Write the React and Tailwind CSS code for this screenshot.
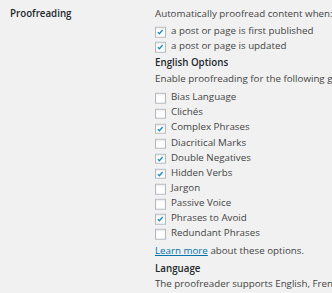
import React from 'react';

const Check = ({ checked }) => (
  <span className="relative inline-block w-[10.5px] h-[10.5px] mr-[5.5px] shrink-0 bg-white border border-[#b4b9be] shadow-[inset_0_1px_2px_rgba(0,0,0,0.1)] translate-y-[1.75px]">
    {checked && (
      <svg viewBox="0 0 10 10" className="absolute left-[0px] top-[0px] w-[8.5px] h-[8.5px]">
        <path d="M2.2 5.2 L4 7 L7.8 2.6" fill="none" stroke="#1e8cbe" strokeWidth="1.6" />
      </svg>
    )}
  </span>
);

const Row = ({ checked, children }) => (
  <div className="flex items-center h-[15.1px]">
    <Check checked={checked} />
    <span>{children}</span>
  </div>
);

export default function App() {
  const options = [
    ['Bias Language', false],
    ['Clichés', false],
    ['Complex Phrases', true],
    ['Diacritical Marks', false],
    ['Double Negatives', true],
    ['Hidden Verbs', true],
    ['Jargon', false],
    ['Passive Voice', false],
    ['Phrases to Avoid', true],
    ['Redundant Phrases', false],
  ];

  return (
    <div
      className="flex w-[332px] h-[293px] overflow-hidden bg-[#f1f1f1] text-[#444] text-[9.75px] leading-[15px] whitespace-nowrap"
      style={{ fontFamily: '"Open Sans", sans-serif' }}
    >
      <div className="w-[155px] shrink-0 pl-[10px] pt-[6px] font-semibold text-[#23282d]">Proofreading</div>

      <div className="pt-[6px]">
        <div>Automatically proofread content when:</div>
        <div className="mt-[2px]">
          <Row checked>a post or page is first published</Row>
          <Row checked>a post or page is updated</Row>
        </div>

        <div className="mt-[1.8px] font-semibold text-[#23282d]">English Options</div>
        <div className="mt-[1px]">Enable proofreading for the following grammar and style rules:</div>
        <div className="mt-[3.2px]">
          {options.map(([label, on]) => (
            <Row key={label} checked={on}>{label}</Row>
          ))}
        </div>

        <div className="mt-[2.8px]">
          <a href="#" className="text-[#0073aa] underline">Learn more</a> about these options.
        </div>
        <div className="mt-[3px] font-semibold text-[#23282d]">Language</div>
        <div className="mt-[0.5px]">The proofreader supports English, French, German, Portuguese and Spanish.</div>
      </div>
    </div>
  );
}
